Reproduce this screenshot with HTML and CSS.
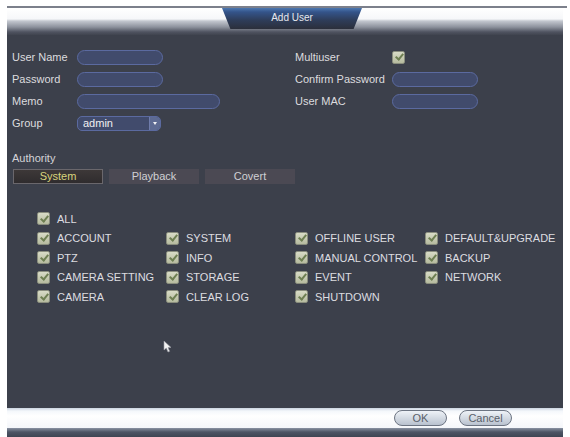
FILE: index.html
```html
<!DOCTYPE html>
<html>
<head>
<meta charset="utf-8">
<link rel="stylesheet" href="styles.css">
</head>
<body>
<div class="window">
  <div class="topline"></div>
  <div class="header">
    <div class="tab-title">Add User</div>
  </div>
  <div class="body">
    <div class="form">
      <div class="col left">
        <div class="row"><span class="lbl">User Name</span><span class="input short"></span></div>
        <div class="row"><span class="lbl">Password</span><span class="input short"></span></div>
        <div class="row"><span class="lbl">Memo</span><span class="input long"></span></div>
        <div class="row"><span class="lbl">Group</span><span class="select"><span class="sel-text">admin</span><span class="sel-arrow"></span></span></div>
      </div>
      <div class="col right">
        <div class="row"><span class="lbl wide">Multiuser</span><span class="cb"></span></div>
        <div class="row"><span class="lbl wide">Confirm Password</span><span class="input short"></span></div>
        <div class="row"><span class="lbl wide">User MAC</span><span class="input short"></span></div>
      </div>
    </div>
    <div class="authority">Authority</div>
    <div class="tabs">
      <span class="tab active">System</span>
      <span class="tab">Playback</span>
      <span class="tab">Covert</span>
    </div>
    <div class="perms">
      <div class="perm all"><span class="cb"></span><span>ALL</span></div>
      <div class="grid">
        <div class="perm"><span class="cb"></span><span>ACCOUNT</span></div>
        <div class="perm"><span class="cb"></span><span>SYSTEM</span></div>
        <div class="perm"><span class="cb"></span><span>OFFLINE USER</span></div>
        <div class="perm"><span class="cb"></span><span>DEFAULT&amp;UPGRADE</span></div>
        <div class="perm"><span class="cb"></span><span>PTZ</span></div>
        <div class="perm"><span class="cb"></span><span>INFO</span></div>
        <div class="perm"><span class="cb"></span><span>MANUAL CONTROL</span></div>
        <div class="perm"><span class="cb"></span><span>BACKUP</span></div>
        <div class="perm"><span class="cb"></span><span>CAMERA SETTING</span></div>
        <div class="perm"><span class="cb"></span><span>STORAGE</span></div>
        <div class="perm"><span class="cb"></span><span>EVENT</span></div>
        <div class="perm"><span class="cb"></span><span>NETWORK</span></div>
        <div class="perm"><span class="cb"></span><span>CAMERA</span></div>
        <div class="perm"><span class="cb"></span><span>CLEAR LOG</span></div>
        <div class="perm"><span class="cb"></span><span>SHUTDOWN</span></div>
      </div>
    </div>
    <svg class="cursor" width="9" height="13" viewBox="0 0 9 13"><path d="M1 1 L1 10 L3.3 8 L5 12 L6.6 11.3 L5 7.6 L8 7.4 Z" fill="#f2f2f2" stroke="#9a9ca4" stroke-width="0.6"/></svg>
  </div>
  <div class="footer">
    <span class="btn">OK</span>
    <span class="btn">Cancel</span>
  </div>
  <div class="bottombar"></div>
</div>
</body>
</html>
```
FILE: styles.css
```css
html, body {
  margin: 0;
  padding: 0;
  background: #ffffff;
}
body {
  font-family: "Liberation Sans", Arial, sans-serif;
  font-size: 11px;
  color: #d9d9dc;
}
.window {
  width: 556px;
  margin: 6px 0 0 7px;
}
.topline {
  height: 2px;
  width: 560px;
  background: #7c808b;
}
.header {
  height: 27px;
  background: linear-gradient(to bottom, #ffffff 0, #f6f7f9 11px, #c3c7cf 13px, #8d929d 19px, #4f5360 24px, #40444f 27px);
  display: flex;
  justify-content: center;
  padding-left: 14px;
  box-sizing: border-box;
}
.tab-title {
  width: 140px;
  height: 21px;
  clip-path: polygon(0 0, 100% 0, 94% 100%, 6% 100%);
  background: linear-gradient(to bottom, #4d78b0 0, #34548a 4px, #2e3d5a 12px, #2b2f3b 21px);
  color: #e6e8ee;
  font-size: 10px;
  text-align: center;
  line-height: 20px;
}
.body {
  position: relative;
  height: 373px;
  background: #3c404b;
  padding: 11px 0 0 5px;
  box-sizing: border-box;
}
.form {
  display: flex;
}
.col {
  display: flex;
  flex-direction: column;
}
.col.left {
  width: 283px;
}
.row {
  height: 22px;
  display: flex;
  align-items: center;
}
.lbl {
  width: 65px;
  color: #dcdcdf;
}
.lbl.wide {
  width: 97px;
}
.input {
  height: 13px;
  border: 1px solid #5b6aa0;
  border-radius: 8px;
  background: #414b6c;
  box-sizing: content-box;
}
.input.short {
  width: 84px;
}
.input.long {
  width: 141px;
}
.select {
  width: 82px;
  height: 13px;
  border: 1px solid #5b6aa0;
  border-radius: 5px;
  background: #414b6c;
  display: flex;
  overflow: hidden;
}
.sel-text {
  flex: 1;
  padding-left: 5px;
  color: #f0f0f2;
  font-size: 11px;
  line-height: 13px;
}
.sel-arrow {
  width: 10px;
  background: #5d6a92;
  border-left: 1px solid #6f7cab;
  position: relative;
}
.sel-arrow::after {
  content: "";
  position: absolute;
  left: 3px;
  top: 5px;
  border-left: 2px solid transparent;
  border-right: 2px solid transparent;
  border-top: 3px solid #f2f2f4;
}
.cb {
  width: 11px;
  height: 11px;
  border: 1px solid #8a8e7e;
  border-radius: 2px;
  background: linear-gradient(to bottom, #d8dbc6, #b6bb9f);
  position: relative;
  flex: none;
}
.cb::after {
  content: "";
  position: absolute;
  left: 3.5px;
  top: 0.5px;
  width: 3px;
  height: 6px;
  border-right: 2px solid #6e7f52;
  border-bottom: 2px solid #6e7f52;
  transform: rotate(40deg);
}
.authority {
  margin-top: 17px;
  line-height: 14px;
  color: #d4d4d8;
}
.tabs {
  display: flex;
  gap: 6px;
  margin-top: 4px;
  padding-left: 1px;
}
.tab {
  width: 90px;
  height: 15px;
  box-sizing: border-box;
  background: #4b4953;
  color: #d0d0d4;
  text-align: center;
  line-height: 15px;
}
.tab.active {
  border: 1px solid #6a676c;
  background: linear-gradient(to bottom, #3d3838, #2f2c2e);
  color: #d9d47c;
  line-height: 13px;
}
.perms {
  margin-top: 25px;
  padding-left: 25px;
}
.perm {
  height: 19.5px;
  display: flex;
  align-items: center;
  gap: 7px;
  color: #dddde0;
  white-space: nowrap;
}
.grid {
  display: grid;
  grid-template-columns: 129px 129px 130px 130px;
}
.cursor {
  position: absolute;
  left: 156px;
  top: 305px;
}
.footer {
  height: 20px;
  background: linear-gradient(to bottom, #c9d3df 0, #f4f7fb 3px, #ffffff 8px, #f4f6fa 20px);
  display: flex;
  justify-content: flex-end;
  align-items: center;
  gap: 12px;
  padding-right: 51px;
}
.btn {
  width: 53px;
  height: 16px;
  box-sizing: border-box;
  border: 1px solid #6c7482;
  border-radius: 8px;
  background: linear-gradient(to bottom, #eef2f7, #b9c2cf);
  color: #5a606a;
  font-size: 11px;
  text-align: center;
  line-height: 14px;
}
.bottombar {
  height: 9px;
  background: linear-gradient(to bottom, #8a93a3, #4d5464 4px, #3e4452);
}
```
